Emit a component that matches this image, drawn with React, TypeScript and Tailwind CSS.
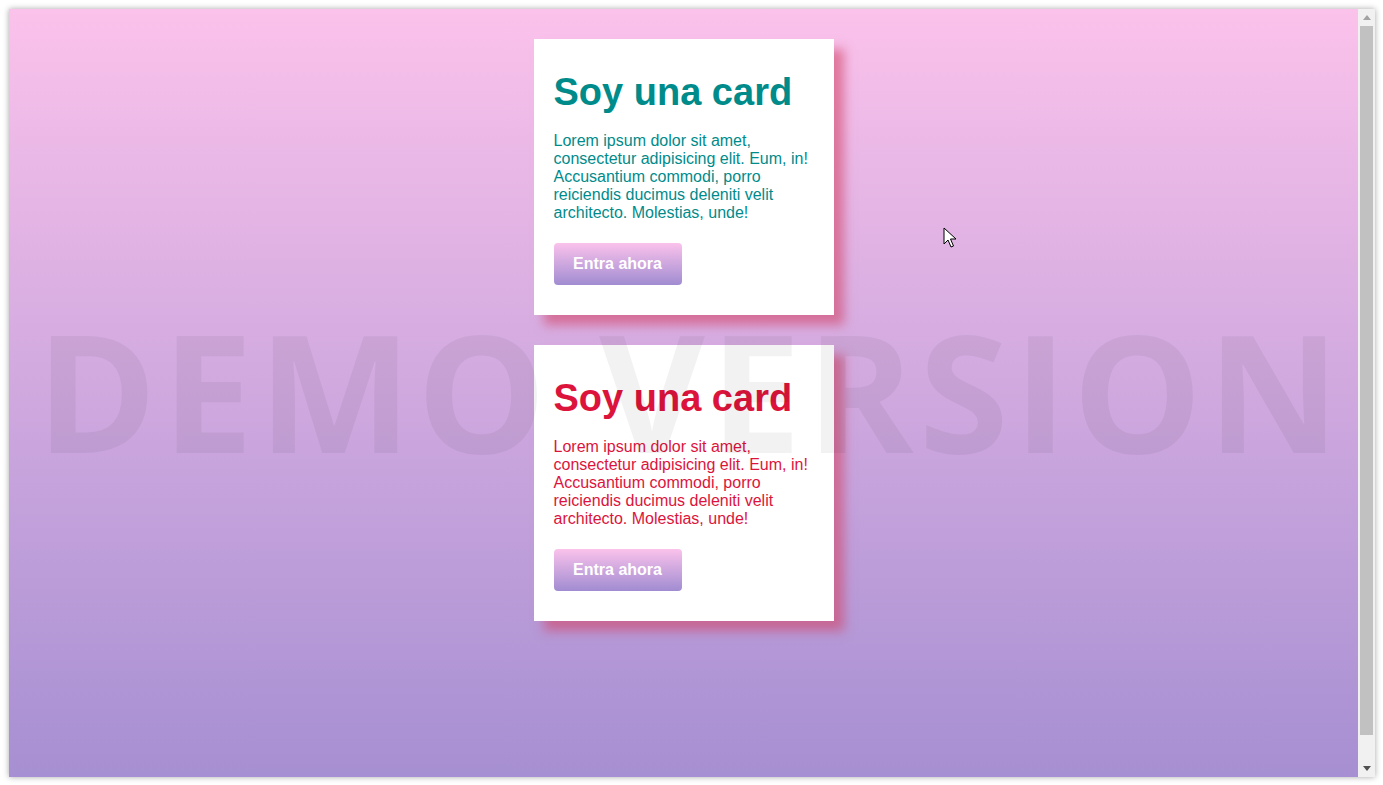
import React from 'react';

const cards = [
  { color: 'text-[#008b8b]' },
  { color: 'text-[#dc143c]' },
];

const Card = ({ color }: { color: string }) => (
  <div className={`w-[300px] bg-white px-5 pt-[31px] pb-[30px] shadow-[10px_10px_10px_rgba(210,70,105,0.6)] ${color}`}>
    <h1 className="text-[38px] leading-[44px] font-bold">Soy una card</h1>
    <p className="mt-[18px] text-base leading-[18px]">
      Lorem ipsum dolor sit amet, consectetur adipisicing elit. Eum, in! Accusantium commodi, porro reiciendis ducimus
      deleniti velit architecto. Molestias, unde!
    </p>
    <button className="mt-[21px] h-[42px] w-[128px] rounded-[4px] bg-gradient-to-b from-[#fbc2eb] to-[#a18cd1] text-base font-bold text-white">
      Entra ahora
    </button>
  </div>
);

export default function App() {
  return (
    <div className="relative h-[785px] w-[1383px] overflow-hidden bg-white font-['Liberation_Sans',Arial,sans-serif]">
      <div className="absolute left-[9px] top-[9px] flex h-[768px] w-[1366px] shadow-[0_0_6px_rgba(0,0,0,0.35)]">
        <div className="relative flex-1 bg-gradient-to-b from-[#fbc2eb] to-[#a68fd2]">
          <div className="flex flex-col items-center gap-[30px] pt-[30px]">
            {cards.map((c, i) => (
              <Card key={i} color={c.color} />
            ))}
          </div>

          {/* watermark */}
          <div className="pointer-events-none absolute left-0 right-0 top-[281px] pl-[14px] text-center font-['Open_Sans',sans-serif] text-[163px] font-bold leading-[200px] tracking-[5px] text-black/[0.05]">
            DEMO VERSION
          </div>

          {/* cursor */}
          <svg className="absolute left-[934px] top-[218px]" width="14" height="22" viewBox="0 0 14 22">
            <path d="M1 1 L1 17 L5 13 L8 20 L10.5 19 L7.5 12 L13 12 Z" fill="white" stroke="black" strokeWidth="1" />
          </svg>
        </div>

        {/* scrollbar */}
        <div className="flex w-[17px] flex-col bg-[#f1f1f1]">
          <div className="flex h-[17px] items-center justify-center">
            <svg width="8" height="5" viewBox="0 0 8 5"><path d="M0 5 L4 0 L8 5 Z" fill="#a3a3a3" /></svg>
          </div>
          <div className="mx-[2px] h-[709px] bg-[#c1c1c1]" />
          <div className="flex-1" />
          <div className="flex h-[17px] items-center justify-center">
            <svg width="8" height="5" viewBox="0 0 8 5"><path d="M0 0 L4 5 L8 0 Z" fill="#505050" /></svg>
          </div>
        </div>
      </div>
    </div>
  );
}
